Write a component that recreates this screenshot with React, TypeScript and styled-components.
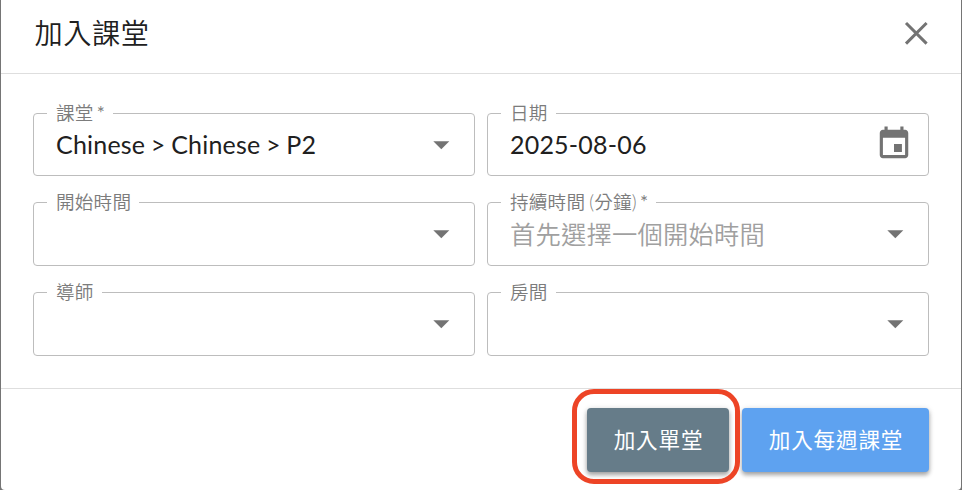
import React from "react";
import styled, { createGlobalStyle } from "styled-components";

const GlobalStyle = createGlobalStyle`
  *, *::before, *::after { box-sizing: border-box; }
  body {
    margin: 0;
    background: #757575;
    overflow: hidden;
    font-family: Lato, "Noto Sans CJK TC", sans-serif;
  }
`;

const Dialog = styled.main`
  width: 960px;
  height: 490px;
  margin: 0 1px;
  display: flex;
  flex-direction: column;
  background: #fff;
  border-radius: 0 0 4px 4px;
`;

const Header = styled.header`
  height: 74px;
  padding: 0 30px 7px 33.5px;
  display: flex;
  align-items: center;
  justify-content: space-between;
  border-bottom: 1px solid #dedede;
`;

const Title = styled.h2`
  margin: 0;
  font-size: 28.2px;
  line-height: 40px;
  font-weight: 350;
  letter-spacing: 0.6px;
  color: #202020;
`;

const IconButton = styled.button`
  padding: 0;
  border: 0;
  background: none;
  color: #737373;
  display: flex;
`;

const Form = styled.form`
  height: 314px;
  padding: 29px 32px 0;
  display: grid;
  grid-template-columns: 442px 442px;
  grid-template-rows: 73px 74px 74px;
  gap: 16px 12px;
  align-content: start;
`;

const Outline = styled.fieldset`
  min-width: 0;
  margin: 0;
  padding: 0;
  border: 1px solid #bdbdbd;
  border-radius: 4px;
`;

const Label = styled.legend`
  height: 21px;
  margin-left: 13px;
  padding: 0 8px 0 9px;
  font-size: 18.6px;
  line-height: 20px;
  font-weight: 350;
  letter-spacing: 0.2px;
  word-spacing: -1.2px;
  white-space: nowrap;
  color: #7c7c7c;
`;

const Required = styled.span`
  font-size: 19px;
  font-weight: 400;
  line-height: 0;
  letter-spacing: 0;
  word-spacing: -1.6px;
`;

const Control = styled.div`
  height: 42px;
  padding: 0 15px 0 22px;
  display: flex;
  align-items: center;
  justify-content: space-between;
  color: #737373;
`;

const Value = styled.span<{ $placeholder?: boolean }>`
  font-size: ${(p) => (p.$placeholder ? 25.3 : 25)}px;
  line-height: 36px;
  padding-bottom: ${(p) => (p.$placeholder ? 0 : 2)}px;
  letter-spacing: 0.2px;
  word-spacing: -1px;
  font-weight: ${(p) => (p.$placeholder ? 350 : 400)};
  color: ${(p) => (p.$placeholder ? "#a0a0a0" : "#202020")};
  white-space: nowrap;
`;

const Footer = styled.footer`
  height: 102px;
  padding: 19px 32px 0;
  display: flex;
  justify-content: flex-end;
  gap: 13px;
  border-top: 1px solid #dedede;
`;

const Highlight = styled.span`
  position: relative;
  display: flex;
  height: 64px;

  &::after {
    content: "";
    position: absolute;
    inset: -19.5px -10.5px -11.5px -15.5px;
    border: 5px solid #ed4426;
    border-radius: 22px;
    pointer-events: none;
  }
`;

const ActionButton = styled.button<{ $color: string; $width: number }>`
  width: ${(p) => p.$width}px;
  height: 64px;
  padding: 0 0 0 1px;
  border: 0;
  border-radius: 4px;
  background: ${(p) => p.$color};
  box-shadow: 0 3px 4px rgba(0, 0, 0, 0.3), 0 1px 6px rgba(0, 0, 0, 0.14);
  color: #fff;
  font: 400 21.6px/32px Lato, "Noto Sans CJK TC", sans-serif;
  letter-spacing: 0.8px;
`;

const CloseIcon = () => (
  <svg width="30" height="30" viewBox="0 0 30 30" fill="none" stroke="currentColor" strokeWidth="3">
    <path d="M5 5 25.6 25.6M25.6 5 5 25.6" />
  </svg>
);

const ArrowIcon = () => (
  <svg width="36" height="36" viewBox="0 0 36 36" fill="currentColor">
    <path d="M10.3 14.3h16l-8 8z" />
  </svg>
);

const CalendarGlyph = styled.svg`
  display: block;
  margin-bottom: 2px;
`;

const CalendarIcon = () => (
  <CalendarGlyph width="38" height="38" viewBox="0 0 24 24" fill="currentColor">
    <path d="M17 12h-5v5h5v-5zM16 1v2H8V1H6v2H5c-1.11 0-1.99.9-1.99 2L3 19c0 1.1.89 2 2 2h14c1.1 0 2-.9 2-2V5c0-1.1-.9-2-2-2h-1V1h-2zm3 18H5V8h14v11z" />
  </CalendarGlyph>
);

type Field = {
  label: string;
  required?: boolean;
  value?: string;
  placeholder?: string;
  date?: boolean;
};

const fields: Field[] = [
  { label: "課堂", required: true, value: "Chinese > Chinese > P2" },
  { label: "日期", value: "2025-08-06", date: true },
  { label: "開始時間" },
  { label: "持續時間 (分鐘)", required: true, placeholder: "首先選擇一個開始時間" },
  { label: "導師" },
  { label: "房間" },
];

export default function App() {
  return (
    <>
      <GlobalStyle />
      <Dialog>
        <Header>
          <Title>加入課堂</Title>
          <IconButton aria-label="關閉">
            <CloseIcon />
          </IconButton>
        </Header>
        <Form>
          {fields.map((f) => (
            <Outline key={f.label}>
              <Label>
                {f.label}
                {f.required && <Required> *</Required>}
              </Label>
              <Control>
                <Value $placeholder={!f.value}>{f.value ?? f.placeholder}</Value>
                {f.date ? <CalendarIcon /> : <ArrowIcon />}
              </Control>
            </Outline>
          ))}
        </Form>
        <Footer>
          <Highlight>
            <ActionButton $color="#667c89" $width={142}>加入單堂</ActionButton>
          </Highlight>
          <ActionButton $color="#5ea2f0" $width={187}>加入每週課堂</ActionButton>
        </Footer>
      </Dialog>
    </>
  );
}
